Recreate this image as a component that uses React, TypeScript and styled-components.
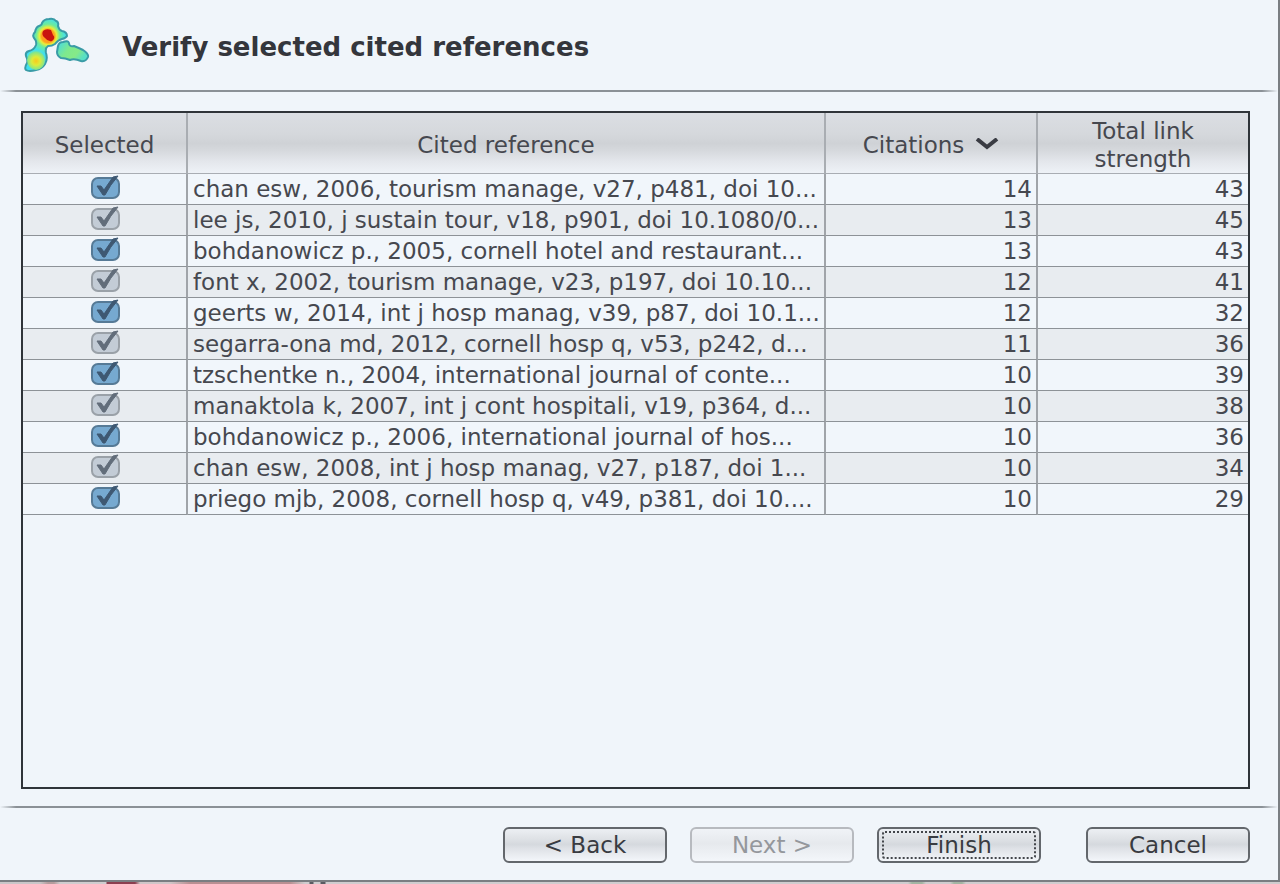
import React, { useState } from "react";
import styled, { createGlobalStyle } from "styled-components";

const GlobalStyle = createGlobalStyle`
  *, *::before, *::after { box-sizing: border-box; }
  body {
    margin: 0;
    background: #c9cccf;
    color: #46484f;
    font-family: "DejaVu Sans", sans-serif;
    font-size: 23px;
    line-height: 28px;
  }
`;

const Desktop = styled.div`
  min-height: 100vh;
  display: flex;
  flex-direction: column;
`;

const Backdrop = styled.div`
  height: 2px;
  background: linear-gradient(
    90deg,
    #c9c6c8 0 40px, #b59c9d 48px 54px, #cfcdcf 60px 106px, #8c3f50 107px 135px,
    #cfc6c8 140px 170px, #b98f92 190px 290px, #cfcdcf 305px 309px, #5a5c62 310px 313px,
    #cfcdcf 314px 320px, #5a5c62 321px 325px, #cfcdcf 326px 908px, #a3b5a3 912px 922px,
    #cfcdcf 926px 950px, #a3b5a3 954px 962px, #cfcdcf 966px
  );
`;

const Dialog = styled.main`
  flex: 1;
  display: flex;
  flex-direction: column;
  background: #f0f5fa;
  border: solid #7a7e82;
  border-width: 0 2px 2px 0;
`;

const Header = styled.header`
  display: flex;
  align-items: center;
  gap: 32px;
  height: 90px;
  padding: 0 24px;
`;

const Title = styled.h1`
  margin: 0;
  padding-top: 4px;
  font-size: 26px;
  line-height: 28px;
  font-weight: bold;
  color: #34363c;
`;

const Separator = styled.hr`
  width: 100%;
  height: 2px;
  margin: 0;
  border: 0;
  background: linear-gradient(90deg, transparent, #8b9196 16px, #8b9196 calc(100% - 16px), transparent);
`;

const Content = styled.section`
  flex: 1;
  display: flex;
  padding: 19px 28px 17px 21px;
`;

const TableFrame = styled.div`
  flex: 1;
  border: 2px solid #2f3439;
`;

const Table = styled.table`
  width: 100%;
  table-layout: fixed;
  border-collapse: separate;
  border-spacing: 0;
`;

const Col = styled.col<{ $width?: number }>`
  width: ${(p) => (p.$width ? `${p.$width}px` : "auto")};
`;

const HeadRow = styled.tr`
  background: linear-gradient(#dbdee3 0%, #d5d8dc 35%, #cfd2d6 50%, #d6d9dd 62%, #e4e7ec 80%, #eff3f8 100%);
`;

const HeadCell = styled.th`
  height: 61px;
  padding: 4px 2px 0;
  font-weight: normal;
  text-align: center;
  border-bottom: 1px solid #a9adb3;
  border-right: 2px solid #a9adb2;
  &:last-child { border-right: 0; }
`;

const SortButton = styled.button`
  display: inline-flex;
  align-items: center;
  gap: 11px;
  padding: 0;
  border: 0;
  background: none;
  font: inherit;
  color: inherit;
`;

const Row = styled.tr`
  background: #f1f6fb;
  &:nth-child(even) { background: #e8ecf0; }
`;

const Cell = styled.td<{ $align?: "left" | "right" | "center" }>`
  height: 31px;
  padding: 0 4px 0 5px;
  line-height: 30px;
  text-align: ${(p) => p.$align ?? "left"};
  white-space: nowrap;
  overflow: hidden;
  border-bottom: 1px solid #8d9297;
  border-right: 2px solid #a0a4a9;
  &:last-child { border-right: 0; }
`;

const CheckLabel = styled.label`
  display: inline-grid;
  vertical-align: top;
  > * { grid-area: 1 / 1; }
`;

const HiddenCheck = styled.input`
  width: 32px;
  height: 28px;
  margin: 0;
  opacity: 0;
`;

const CheckArt = styled.svg`
  pointer-events: none;
`;

const Footer = styled.footer`
  display: flex;
  justify-content: flex-end;
  gap: 23px;
  height: 72px;
  padding: 19px 28px 0;
`;

const DialogButton = styled.button<{ $apart?: boolean }>`
  width: 164px;
  height: 36px;
  margin-left: ${(p) => (p.$apart ? "22px" : "0")};
  padding: 0;
  border: 2px solid #63676c;
  border-radius: 6px;
  background: linear-gradient(#eceff3, #dfe2e6 30%, #d5d9de 48%, #dfe2e7 62%, #f3f6fa);
  color: #393b41;
  font: inherit;
  &:disabled {
    border-color: #b7babf;
    background: linear-gradient(#f0f3f7, #e6e9ed 45%, #f3f6fa);
    color: #94979c;
  }
`;

const FocusRing = styled.span`
  display: block;
  margin: 2px 3px;
  border: 2px dotted #43464b;
  border-radius: 3px;
  line-height: 24px;
`;

type Reference = { text: string; citations: number; strength: number };

const references: Reference[] = [
  { text: "chan esw, 2006, tourism manage, v27, p481, doi 10...", citations: 14, strength: 43 },
  { text: "lee js, 2010, j sustain tour, v18, p901, doi 10.1080/0...", citations: 13, strength: 45 },
  { text: "bohdanowicz p., 2005, cornell hotel and restaurant...", citations: 13, strength: 43 },
  { text: "font x, 2002, tourism manage, v23, p197, doi 10.10...", citations: 12, strength: 41 },
  { text: "geerts w, 2014, int j hosp manag, v39, p87, doi 10.1...", citations: 12, strength: 32 },
  { text: "segarra-ona md, 2012, cornell hosp q, v53, p242, d...", citations: 11, strength: 36 },
  { text: "tzschentke n., 2004, international journal of conte...", citations: 10, strength: 39 },
  { text: "manaktola k, 2007, int j cont hospitali, v19, p364, d...", citations: 10, strength: 38 },
  { text: "bohdanowicz p., 2006, international journal of hos...", citations: 10, strength: 36 },
  { text: "chan esw, 2008, int j hosp manag, v27, p187, doi 1...", citations: 10, strength: 34 },
  { text: "priego mjb, 2008, cornell hosp q, v49, p381, doi 10....", citations: 10, strength: 29 },
];

function DensityLogo() {
  return (
    <svg width="66" height="56" viewBox="0 0 66 56" aria-hidden="true">
      <defs>
        <radialGradient id="hot" gradientUnits="userSpaceOnUse" cx="24" cy="19" r="18">
          <stop offset="0" stopColor="#ffa01e" />
          <stop offset="0.36" stopColor="#ffa01e" />
          <stop offset="0.48" stopColor="#e8ee3c" />
          <stop offset="0.66" stopColor="#6deb9c" />
          <stop offset="1" stopColor="#3fdff0" />
        </radialGradient>
        <radialGradient id="warm" gradientUnits="userSpaceOnUse" cx="12" cy="44" r="12">
          <stop offset="0" stopColor="#f8c81e" />
          <stop offset="0.35" stopColor="#dcec3a" />
          <stop offset="0.72" stopColor="#84e68a" />
          <stop offset="1" stopColor="#3fdff0" stopOpacity="0" />
        </radialGradient>
        <linearGradient id="cool" x1="0" y1="0" x2="1" y2="0.5">
          <stop offset="0" stopColor="#3fd8ee" />
          <stop offset="0.45" stopColor="#7ee98e" />
          <stop offset="0.75" stopColor="#86ea88" />
          <stop offset="1" stopColor="#58dfc4" />
        </linearGradient>
      </defs>
      <g stroke="#3a9ba6" strokeWidth="2" strokeLinejoin="round">
        <path
          fill="url(#hot)"
          d="M18 6 Q20 2 25 2 Q30 1 32 4 Q35 5 34 9 Q35 13 38 14 Q43 15 43 19 Q42 21 38 22 Q34 23 31 27 Q28 29 24 29 Q21 31 22 36 Q24 42 21 47 Q18 52 12 53 Q5 55 2 53 Q0 51 3 46 Q4 43 2 39 Q1 35 5 34 Q10 33 12 28 Q13 24 10 21 Q8 18 11 15 Q12 10 15 9 Q18 8 18 6 Z"
        />
        <path
          fill="url(#cool)"
          d="M34 29 Q35 25 39 25 Q44 23 45 26 Q45 30 50 29 Q55 31 59 33 Q65 37 64 40 Q62 45 57 44 Q50 41 46 43 Q41 41 37 41 Q33 39 33 35 Z"
        />
      </g>
      <path fill="#c9140f" d="M19 14 Q22 11 27 13 L29 18 Q32 21 28 24 Q24 25 21 21 Q17 18 19 14 Z" />
      <ellipse cx="12" cy="43" rx="9" ry="10" fill="url(#warm)" />
    </svg>
  );
}

function SelectCheck({ name, muted }: { name: string; muted: boolean }) {
  const [on, setOn] = useState(true);
  return (
    <CheckLabel>
      <HiddenCheck type="checkbox" aria-label={name} checked={on} onChange={(e) => setOn(e.target.checked)} />
      <CheckArt width="32" height="28" viewBox="0 1 32 28" aria-hidden="true">
        <rect
          x="3" y="5" width="27" height="20" rx="6"
          fill={muted ? "#c3ccd6" : "#76a9d0"} stroke={muted ? "#9aa1a8" : "#567a96"} strokeWidth="2"
        />
        {on && (
          <path
            d="M8 13 L12 13 L15 17 L24 4 L29 3 Q21 12 16 22 L14 22 Z"
            fill={muted ? "#626d7a" : "#3e5872"} stroke={muted ? "#626d7a" : "#3e5872"}
            strokeWidth="1" strokeLinejoin="round"
          />
        )}
      </CheckArt>
    </CheckLabel>
  );
}

export default function App() {
  return (
    <Desktop>
      <GlobalStyle />
      <Dialog>
        <Header>
          <DensityLogo />
          <Title>Verify selected cited references</Title>
        </Header>
        <Separator />
        <Content>
          <TableFrame>
            <Table>
              <colgroup>
                <Col $width={165} />
                <Col />
                <Col $width={212} />
                <Col $width={210} />
              </colgroup>
              <thead>
                <HeadRow>
                  <HeadCell scope="col">Selected</HeadCell>
                  <HeadCell scope="col">Cited reference</HeadCell>
                  <HeadCell scope="col" aria-sort="descending">
                    <SortButton type="button">
                      Citations
                      <svg width="24" height="14" viewBox="0 0 24 14" aria-hidden="true">
                        <path d="M2 1 L12 9 L22 1" fill="none" stroke="#3a3c43" strokeWidth="4" />
                      </svg>
                    </SortButton>
                  </HeadCell>
                  <HeadCell scope="col">Total link<br />strength</HeadCell>
                </HeadRow>
              </thead>
              <tbody>
                {references.map((r, i) => (
                  <Row key={r.text}>
                    <Cell $align="center"><SelectCheck name={r.text} muted={i % 2 === 1} /></Cell>
                    <Cell>{r.text}</Cell>
                    <Cell $align="right">{r.citations}</Cell>
                    <Cell $align="right">{r.strength}</Cell>
                  </Row>
                ))}
              </tbody>
            </Table>
          </TableFrame>
        </Content>
        <Separator />
        <Footer>
          <DialogButton type="button">&lt; Back</DialogButton>
          <DialogButton type="button" disabled>Next &gt;</DialogButton>
          <DialogButton type="button"><FocusRing>Finish</FocusRing></DialogButton>
          <DialogButton type="button" $apart>Cancel</DialogButton>
        </Footer>
      </Dialog>
      <Backdrop />
    </Desktop>
  );
}
